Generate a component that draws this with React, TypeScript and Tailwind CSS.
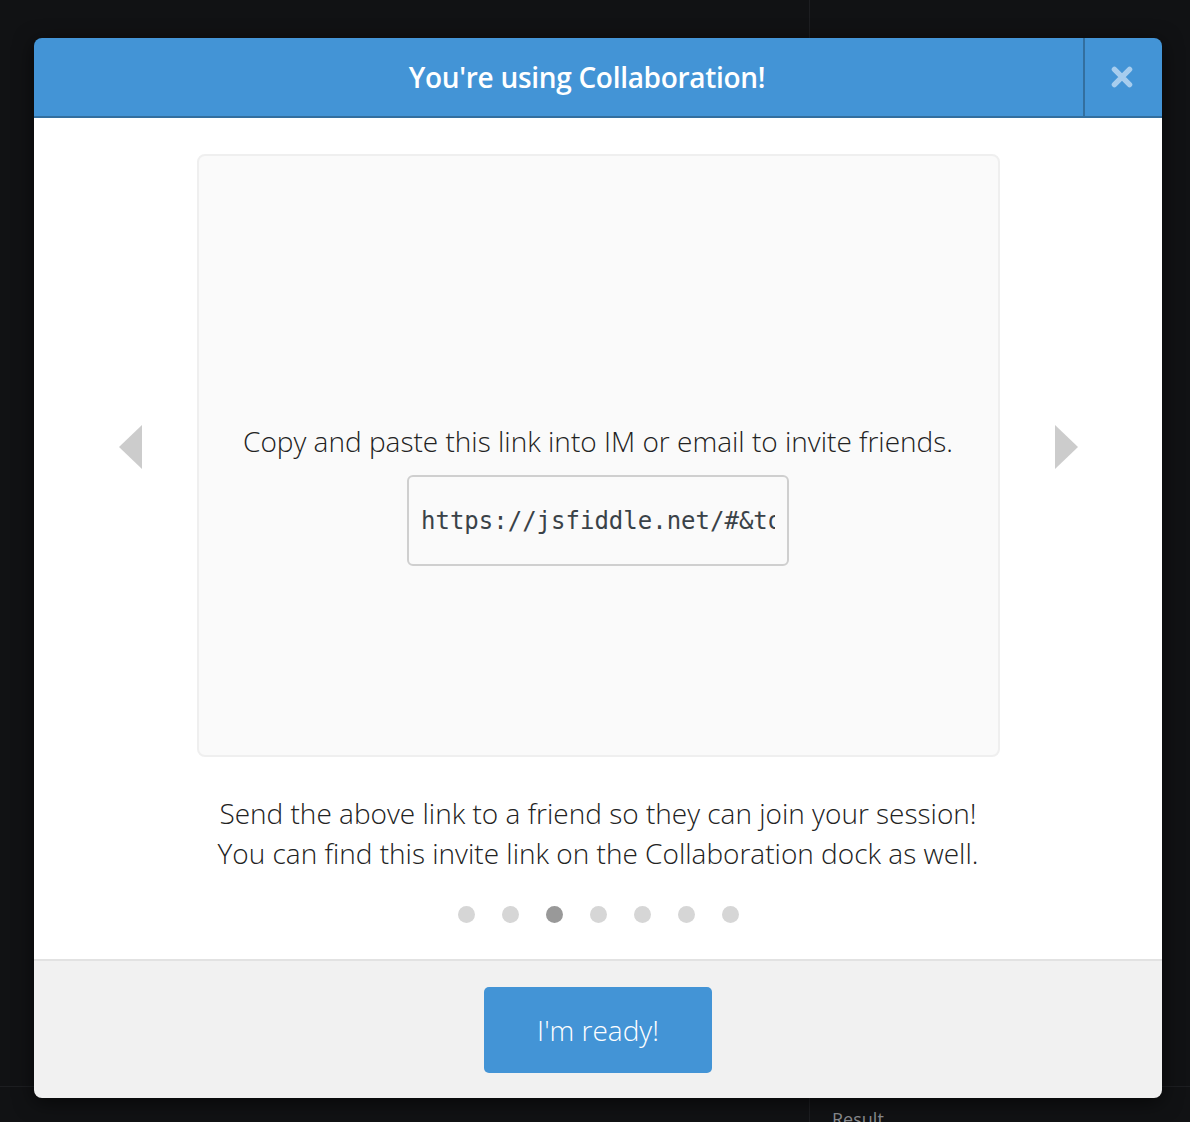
// Collaboration intro modal over a dark editor layout
const DOTS = [0, 1, 2, 3, 4, 5, 6];
const ACTIVE = 2;

function CloseIcon() {
  return (
    <svg className="w-[26px] h-[26px]" viewBox="0 0 24 24" fill="none">
      <path d="M5 5l14 14M19 5L5 19" stroke="#a7cdee" strokeWidth={5} strokeLinecap="round" />
    </svg>
  );
}

function Arrow({ dir }: { dir: "left" | "right" }) {
  return (
    <svg className="w-[24px] h-[44px] mb-[18px]" viewBox="0 0 24 44">
      {dir === "left" ? (
        <polygon points="23,0 23,44 0,22" fill="#cccccc" />
      ) : (
        <polygon points="1,0 1,44 24,22" fill="#cccccc" />
      )}
    </svg>
  );
}

export default function App() {
  return (
    <div className="relative w-[1190px] h-[1122px] overflow-hidden bg-[#111214] font-['Open_Sans',sans-serif]">
      {/* editor layout behind the overlay */}
      <div className="grid grid-cols-[810px_1fr] grid-rows-[1087px_1fr] h-full">
        <div className="border-r border-b border-[#1d1e21]" />
        <div className="border-b border-[#1d1e21]" />
        <div className="border-r border-[#1d1e21]" />
        <div className="pl-[22px] pt-[20px] text-[18px] leading-[24px] text-[#8a8c90]">Result</div>
      </div>

      {/* modal */}
      <div className="absolute left-[34px] top-[38px] w-[1128px] rounded-[8px] overflow-hidden shadow-[0_4px_20px_rgba(0,0,0,0.6)] flex flex-col">
        <div className="flex h-[80px] bg-[#4394d6] border-b-2 border-[#336f9f]">
          <div className="flex-1 flex items-center justify-center pl-[57px]">
            <h2 className="text-white text-[28px] font-semibold tracking-[-0.3px]">You're using Collaboration!</h2>
          </div>
          <button className="w-[79px] flex items-center justify-center border-l-2 border-[#336f9f] pr-[4px]">
            <CloseIcon />
          </button>
        </div>

        <div className="bg-white flex flex-col items-center pt-[36px] pb-[34px] h-[841px]">
          <div className="flex items-center gap-[54px]">
            <Arrow dir="left" />
            <div className="w-[803px] h-[603px] bg-[#fafafa] border-2 border-[#efefef] rounded-[8px] flex flex-col items-center justify-center pt-[78px]">
              <p className="text-[28px] font-light text-[#222] leading-[36px]">
                Copy and paste this link into IM or email to invite friends.
              </p>
              <div className="mt-[16px] w-[382px] h-[91px] border-2 border-[#cfcfcf] rounded-[6px] bg-[#fafafa] flex items-center px-[12px] overflow-hidden">
                <span className="font-['DejaVu_Sans_Mono',monospace] text-[24px] text-[#3a4248] whitespace-nowrap overflow-hidden">
                  https://jsfiddle.net/#&togetherjs=abc123
                </span>
              </div>
            </div>
            <Arrow dir="right" />
          </div>

          <div className="mt-[36px] text-center text-[28px] font-light text-[#222] leading-[40px]">
            <p>Send the above link to a friend so they can join your session!</p>
            <p>You can find this invite link on the Collaboration dock as well.</p>
          </div>

          <div className="mt-[33px] flex gap-[27px]">
            {DOTS.map((i) => (
              <span
                key={i}
                className={i === ACTIVE ? "w-[17px] h-[17px] rounded-full bg-[#999999]" : "w-[17px] h-[17px] rounded-full bg-[#d6d6d6]"}
              />
            ))}
          </div>
        </div>

        <div className="bg-[#f1f1f1] border-t-2 border-[#e2e2e2] h-[139px] flex items-start justify-center pt-[26px]">
          <button className="w-[228px] h-[86px] bg-[#4394d6] rounded-[5px] text-white text-[28px] font-light">
            I'm ready!
          </button>
        </div>
      </div>
    </div>
  );
}
